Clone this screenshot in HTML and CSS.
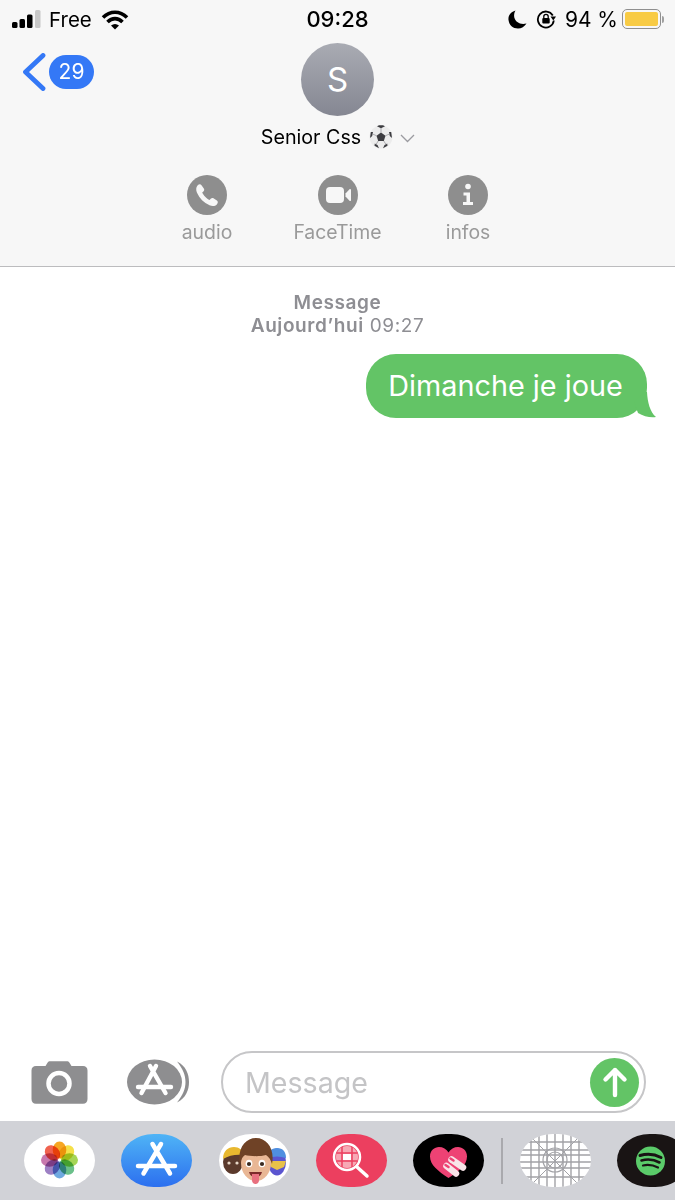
FILE: index.html
```html
<!DOCTYPE html>
<html lang="fr">
<head>
  <meta charset="UTF-8" />
  <meta name="viewport" content="width=device-width, initial-scale=1.0" />
  <title>Messages - Senior Css</title>
  <link rel="stylesheet" href="styles.css">
</head>
<body>
  <div class="phone">

    <header class="top">
      <div class="status">
        <div class="status-left">
          <svg class="signal" width="30" height="20" viewBox="0 0 30 20">
            <rect x="0" y="13" width="5.5" height="6" rx="1.5" fill="#000"/>
            <rect x="7.5" y="10" width="5.5" height="9" rx="1.5" fill="#000"/>
            <rect x="15" y="5.500" width="5.5" height="13.5" rx="1.5" fill="#000"/>
            <rect x="23" y="1" width="5.5" height="18" rx="1.5" fill="#c8c8c8"/>
          </svg>
          <span>Free</span>
          <svg class="wifi" width="28" height="21" viewBox="0 0 28 21">
            <path d="M2 8.500C9 1.500 19 1.500 26 8.500" fill="none" stroke="#000" stroke-width="3.600"/>
            <path d="M6.500 13C11 8.500 17 8.500 21.500 13" fill="none" stroke="#000" stroke-width="3.600"/>
            <path d="M10 16.500L14 20.500L18 16.500C15.500 14.500 12.500 14.500 10 16.500Z" fill="#000"/>
          </svg>
        </div>
        <div class="status-time">09:28</div>
        <div class="status-right">
          <svg width="19" height="19" viewBox="0 0 19 19">
            <path d="M7.500 0.500C2.500 2 0 5.500 0.500 10C1 15 5 18.500 10 18.500C13.500 18.500 16.500 16.500 18.500 13.500C12 15 7.500 12 6.300 7.500C5.800 5 6.300 2.500 7.500 0.500Z" fill="#000"/>
          </svg>
          <svg class="lock-rotate" width="20" height="20" viewBox="0 0 20 20">
            <path d="M16.800 6.500A8 8 0 1 0 17.800 11.500" fill="none" stroke="#000" stroke-width="1.800"/>
            <path d="M14.500 7.500L20 7.500L17.300 11.500Z" fill="#000"/>
            <rect x="6.300" y="9" width="7.400" height="5.500" rx="1" fill="#000"/>
            <path d="M7.800 9V7.500A2.200 2.200 0 0 1 12.200 7.500V9" fill="none" stroke="#000" stroke-width="1.300"/>
          </svg>
          <span class="percent">94 %</span>
          <div class="battery"><div class="battery-level"></div></div>
          <div class="battery-tip"></div>
        </div>
      </div>

      <div class="contact">
        <a class="back">
          <svg width="24" height="38" viewBox="0 0 24 38">
            <path d="M21 2.500L3.500 19L21 35.500" fill="none" stroke="#3478f6" stroke-width="4.800" stroke-linecap="round" stroke-linejoin="round"/>
          </svg>
          <span class="badge">29</span>
        </a>
        <div class="avatar">S</div>
      </div>

      <div class="name">
        <span>Senior Css</span>
        <svg class="ball" width="24" height="24" viewBox="0 0 24 24">
          <circle cx="12" cy="12" r="11.500" fill="#ececec"/>
          <path d="M12 7.500L16.500 10.700L14.800 16H9.200L7.500 10.700Z" fill="#3c3c40"/>
          <path d="M8 1.200L12 3.200L16 1.200L14 0.300H10Z M1.800 7L1 13L3.200 11L4 7Z M22.200 7L23 13L20.800 11L20 7Z M5.500 20.800L10 23.300L8.500 20L5.800 18.500Z M18.500 20.800L14 23.300L15.500 20L18.200 18.500Z" fill="#3c3c40"/>
          <path d="M12 7.500V3M16.500 10.700L20.500 9M7.500 10.700L3.500 9M14.800 16L17 19.500M9.200 16L7 19.500" stroke="#9a9a9e" stroke-width="0.800" fill="none"/>
        </svg>
        <svg class="caret" width="15" height="9" viewBox="0 0 15 9">
          <path d="M1 1L7.500 7.500L14 1" fill="none" stroke="#9b9ba0" stroke-width="1.300"/>
        </svg>
      </div>

      <div class="actions">
        <div class="action">
          <div class="action-icon">
            <svg width="40" height="40" viewBox="0 0 40 40">
              <path d="M10.500 10.500C12 9 13.500 9 14.500 10.200L16.800 13.500C17.500 14.600 17.300 15.700 16.400 16.500L15.200 17.600C16.200 20.200 19.800 24 22.600 25L23.700 23.800C24.500 22.900 25.700 22.700 26.800 23.400L29.900 25.500C31.100 26.400 31.200 27.900 29.800 29.400C28 31.200 25.500 31.500 22.500 30.200C16.800 27.800 12.500 23.400 10 17.800C8.800 15 9 12.300 10.500 10.500Z" fill="#f7f7f7"/>
            </svg>
          </div>
          <span>audio</span>
        </div>
        <div class="action">
          <div class="action-icon">
            <svg width="40" height="40" viewBox="0 0 40 40">
              <rect x="8" y="12" width="18" height="16" rx="4" fill="#f7f7f7"/>
              <path d="M27.500 18.500L31.500 14.200C32.200 13.600 33 14 33 14.800V25.200C33 26 32.200 26.400 31.500 25.800L27.500 21.500Z" fill="#f7f7f7"/>
            </svg>
          </div>
          <span>FaceTime</span>
        </div>
        <div class="action">
          <div class="action-icon">
            <svg width="40" height="40" viewBox="0 0 40 40">
              <circle cx="20" cy="11.500" r="2.800" fill="#f7f7f7"/>
              <path d="M15.500 17.500H22V27H25V30H15V27H18.500V20.500H15.500Z" fill="#f7f7f7"/>
            </svg>
          </div>
          <span>infos</span>
        </div>
      </div>
    </header>

    <main class="thread">
      <div class="meta">
        <div class="meta-strong">Message</div>
        <div><span class="meta-strong">Aujourd’hui</span> 09:27</div>
      </div>
      <div class="bubble">
        Dimanche je joue
        <svg class="tail" width="24" height="26" viewBox="0 0 24 26">
          <path d="M12 0H15C15.500 10 18 20 24 25C18.500 25.800 11.500 24.500 6 21L2 10Z" fill="#63c466"/>
        </svg>
      </div>
    </main>

    <div class="composer">
      <svg class="camera" width="57" height="43" viewBox="0 0 57 43">
        <path d="M5 5H14.500L16.500 1.800C17.200 0.700 18 0.300 19.500 0.300H35.500C37 0.300 37.800 0.700 38.500 1.800L40.500 5H52C54.800 5 56.500 6.700 56.500 9.500V38C56.500 41 54.800 42.700 52 42.700H5C2.200 42.700 0.500 41 0.500 38V9.500C0.500 6.700 2.200 5 5 5Z" fill="#8e8e90"/>
        <circle cx="28" cy="22.500" r="10.500" fill="none" stroke="#fff" stroke-width="4.500"/>
      </svg>
      <svg class="apps" width="63" height="46" viewBox="0 0 63 46">
        <path d="M50 2.500C59 7 62 15 62 23C62 31 59 39 50 43.500C56 36 58.500 30 58.500 23C58.500 16 56 10 50 2.500Z" fill="#8e8e90"/>
        <ellipse cx="27.500" cy="23" rx="27.500" ry="22.500" fill="#8e8e90"/>
        <path d="M23 7L38.500 34M29 7L14.500 34" stroke="#fff" stroke-width="4.400" stroke-linecap="round"/>
        <path d="M11 28H44" stroke="#fff" stroke-width="4.400" stroke-linecap="round"/>
      </svg>
      <div class="field">
        <span class="placeholder">Message</span>
        <div class="send">
          <svg width="28" height="32" viewBox="0 0 28 32">
            <path d="M14 29V4M4.500 13.500L14 4L23.500 13.500" fill="none" stroke="#fff" stroke-width="4.400" stroke-linecap="round" stroke-linejoin="round"/>
          </svg>
        </div>
      </div>
    </div>

    <nav class="dock">
      <div class="app app-white">
        <svg width="71" height="53" viewBox="0 0 71 53">
          <g transform="translate(35.500 26)">
            <ellipse class="petal" cy="-10" rx="6.800" ry="8.500" fill="#f6a623"/>
            <ellipse class="petal" cy="-10" rx="6.800" ry="8.500" fill="#f5e04a" transform="rotate(45)"/>
            <ellipse class="petal" cy="-10" rx="6.800" ry="8.500" fill="#a5d556" transform="rotate(90)"/>
            <ellipse class="petal" cy="-10" rx="6.800" ry="8.500" fill="#6bc08a" transform="rotate(135)"/>
            <ellipse class="petal" cy="-10" rx="6.800" ry="8.500" fill="#6fa9e0" transform="rotate(180)"/>
            <ellipse class="petal" cy="-10" rx="6.800" ry="8.500" fill="#9d80c4" transform="rotate(225)"/>
            <ellipse class="petal" cy="-10" rx="6.800" ry="8.500" fill="#c878ad" transform="rotate(270)"/>
            <ellipse class="petal" cy="-10" rx="6.800" ry="8.500" fill="#f0624f" transform="rotate(315)"/>
          </g>
        </svg>
      </div>
      <div class="app app-store">
        <svg width="71" height="53" viewBox="0 0 71 53">
          <path d="M31.500 10L49 39.500M40 10L22.500 39.500M17 32H54" stroke="#fff" stroke-width="4.500" stroke-linecap="round"/>
        </svg>
      </div>
      <div class="app app-white">
        <svg width="71" height="53" viewBox="0 0 71 53">
          <!-- side figures -->
          <ellipse cx="14" cy="28" rx="10" ry="12" fill="#5b3a2c"/>
          <path d="M4 25C4 17 9 13 15 13C20 13 24 16 25 21C18 20 10 21 4 25Z" fill="#e8b82f"/>
          <circle cx="10" cy="29" r="1.600" fill="#e8d8c8"/>
          <circle cx="18" cy="29" r="1.600" fill="#e8d8c8"/>
          <ellipse cx="58" cy="28" rx="9" ry="13.500" fill="#5b55d0"/>
          <path d="M49 24C49 18 52 14 58 14C64 14 67 18 67 24C61 22 55 22 49 24Z" fill="#4f8fe0"/>
          <path d="M49 27H67L65 33L58 36L52 33Z" fill="#e8c24a"/>
          <!-- main head -->
          <ellipse cx="37" cy="29" rx="15" ry="18" fill="#e9b795"/>
          <path d="M21 30C18 15 26 4 37 4C48 4 56 15 53 30C52 26 50 23 47 21C40 23 30 22 26 21C23 23 22 26 21 30Z" fill="#6f4226"/>
          <ellipse cx="30" cy="29.500" rx="3.400" ry="3.800" fill="#fff"/>
          <ellipse cx="43" cy="29.500" rx="3.400" ry="3.800" fill="#fff"/>
          <circle cx="30" cy="30" r="2.100" fill="#3a2a20"/>
          <circle cx="43" cy="30" r="2.100" fill="#3a2a20"/>
          <path d="M30 38H43C42 42 39.500 43 36.500 43C33.500 43 31 42 30 38Z" fill="#7c2a2a"/>
          <path d="M33 40H40V46C40 48.500 38.500 50 36.500 50C34.500 50 33 48.500 33 46Z" fill="#e8707f"/>
        </svg>
      </div>
      <div class="app app-search">
        <svg width="71" height="53" viewBox="0 0 71 53">
          <circle cx="31" cy="23" r="11" fill="#f7a9b5"/>
          <path d="M20.500 19H41.500M20.500 27H41.500M26 12.500V33.500M36 12.500V33.500" stroke="#ec3f5f" stroke-width="1.500"/>
          <rect x="27" y="20" width="8" height="6" fill="#fff"/>
          <circle cx="31" cy="23" r="13" fill="none" stroke="#fff" stroke-width="2.500"/>
          <path d="M41 33L51 42" stroke="#fff" stroke-width="3.500" stroke-linecap="round"/>
        </svg>
      </div>
      <div class="app app-black">
        <svg width="71" height="53" viewBox="0 0 71 53">
          <path d="M35.500 44C25 37 17 31 17 22.500C17 16.500 21.500 13 26 13C30 13 33.500 15 35.500 18.500C37.500 15 41 13 45 13C49.500 13 54 16.500 54 22.500C54 31 46 37 35.500 44Z" fill="#ee4274"/>
          <path d="M38.500 25.500L50 33.500" stroke="#f8e4e8" stroke-width="6.500" stroke-linecap="round"/>
          <path d="M33.500 32L43 39.500" stroke="#f8e4e8" stroke-width="6.500" stroke-linecap="round"/>
          <path d="M37.500 24.500L40.500 26.500M32.500 31L35.500 33" stroke="#ee4274" stroke-width="2.500" stroke-linecap="round"/>
        </svg>
      </div>
      <div class="dock-divider"></div>
      <div class="app app-grid">
        <svg width="71" height="53" viewBox="0 0 71 53">
          <path d="M0 8H71M0 16H71M0 21H71M0 28H71M0 34H71M0 43H71M11 0V53M19 0V53M27 0V53M35 0V53M43 0V53M51 0V53M59 0V53" stroke="#a2a2a6" stroke-width="1.400" fill="none"/>
          <path d="M8 0L61 53M62 0L9 53" stroke="#a2a2a6" stroke-width="1" fill="none"/>
          <circle cx="35" cy="26" r="8" fill="none" stroke="#a2a2a6" stroke-width="1.200"/>
          <circle cx="35" cy="26" r="12" fill="none" stroke="#a2a2a6" stroke-width="1.200"/>
        </svg>
      </div>
      <div class="app app-spotify">
        <svg width="71" height="53" viewBox="0 0 71 53">
          <circle cx="33.500" cy="27" r="14.500" fill="#5bcb6a"/>
          <path d="M23 21.500C29.500 19.500 37.500 20 44 23.500" fill="none" stroke="#191414" stroke-width="3" stroke-linecap="round"/>
          <path d="M24.500 26.500C30 25 37 25.500 42.500 28.500" fill="none" stroke="#191414" stroke-width="2.600" stroke-linecap="round"/>
          <path d="M26 31.500C30.500 30.500 36 31 41 33.500" fill="none" stroke="#191414" stroke-width="2.200" stroke-linecap="round"/>
        </svg>
      </div>
    </nav>

  </div>
</body>
</html>
```

FILE: styles.css
```css
* {
  box-sizing: border-box;
}
body {
  margin: 0;
  font-family: Inter, "Liberation Sans", sans-serif;
  background-color: #fff;
  color: #000;
}
.phone {
  display: flex;
  flex-direction: column;
  height: 1200px;
  overflow: hidden;
}

/* header */
.top {
  height: 267px;
  background-color: #f7f7f7;
  border-bottom: 1px solid #bcbcbe;
}
.status {
  display: grid;
  grid-template-columns: 1fr auto 1fr;
  align-items: center;
  height: 38px;
  padding: 0 11px;
  font-size: 20.500px;
}
.status-left {
  display: flex;
  align-items: center;
  padding-left: 1px;
}
.signal {
  margin-right: 7px;
}
.wifi {
  margin-left: 9px;
}
.status-time {
  font-size: 22px;
  font-weight: 500;
}
.status-right {
  display: flex;
  align-items: center;
  justify-content: flex-end;
}
.lock-rotate {
  margin-left: 9px;
}
.percent {
  margin-left: 9px;
  margin-right: 4px;
  font-size: 21px;
}
.battery {
  width: 39px;
  height: 20px;
  padding: 2px;
  border: 1.500px solid #8f8f8f;
  border-radius: 5px;
}
.battery-level {
  height: 100%;
  background-color: #f8cb45;
  border-radius: 2px;
}
.battery-tip {
  width: 2px;
  height: 7px;
  margin-left: 1px;
  background-color: #a0a0a0;
  border-radius: 0 2px 2px 0;
}
.contact {
  display: flex;
  justify-content: center;
  position: relative;
  padding-top: 5px;
}
.back {
  display: flex;
  align-items: center;
  position: absolute;
  left: 22px;
  top: 15px;
}
.badge {
  width: 45px;
  height: 34px;
  margin-left: 3px;
  background-color: #3478f6;
  border-radius: 17px;
  color: #fff;
  font-size: 21px;
  line-height: 34px;
  text-align: center;
}
.avatar {
  width: 73px;
  height: 73px;
  background: linear-gradient(#a9abb3, #858792);
  border-radius: 50%;
  color: #fff;
  font-size: 33px;
  line-height: 73px;
  text-align: center;
}
.name {
  display: flex;
  align-items: center;
  justify-content: center;
  height: 28px;
  margin-top: 7px;
  padding-left: 1px;
  font-size: 19.700px;
}
.ball {
  margin-left: 8px;
}
.caret {
  margin-left: 7px;
  margin-top: 3px;
}
.actions {
  display: flex;
  justify-content: center;
  margin-top: 24px;
}
.action {
  display: flex;
  flex-direction: column;
  align-items: center;
  width: 130.500px;
  color: #9a9a9a;
  font-size: 19.400px;
}
.action span {
  margin-top: 5px;
}
.action-icon {
  width: 40px;
  height: 40px;
  background-color: #8e8e8e;
  border-radius: 50%;
}

/* conversation */
.thread {
  flex: 1;
  display: flex;
  flex-direction: column;
}
.meta {
  margin-top: 24px;
  color: #8e8e93;
  font-size: 19px;
  letter-spacing: 0.600px;
  line-height: 23px;
  text-align: center;
}
.meta-strong {
  font-weight: 600;
}
.bubble {
  position: relative;
  align-self: flex-end;
  width: 281px;
  height: 64px;
  margin: 17px 28px 0 0;
  padding-right: 2px;
  background-color: #63c466;
  border-radius: 30px;
  color: #fff;
  font-size: 28.800px;
  line-height: 63px;
  text-align: center;
}
.tail {
  position: absolute;
  right: -9px;
  bottom: 0;
}

/* message field */
.composer {
  display: flex;
  align-items: center;
  padding: 0 29px 8px 31px;
}
.camera {
  margin-top: 1px;
  flex-shrink: 0;
}
.apps {
  margin-left: 39px;
  flex-shrink: 0;
}
.field {
  flex: 1;
  display: flex;
  align-items: center;
  justify-content: space-between;
  height: 62px;
  margin-left: 31px;
  padding: 0 5px 0 22px;
  border: 2px solid #c6c6c8;
  border-radius: 31px;
}
.placeholder {
  color: #c4c4c6;
  font-size: 28.600px;
}
.send {
  display: flex;
  align-items: center;
  justify-content: center;
  width: 49px;
  height: 49px;
  background-color: #63c466;
  border-radius: 50%;
}

/* app strip */
.dock {
  display: flex;
  align-items: center;
  gap: 26.300px;
  height: 79px;
  padding-left: 24px;
  background-color: #d1d2d7;
  overflow: hidden;
}
.app {
  flex-shrink: 0;
  width: 71px;
  height: 53px;
  border-radius: 46% / 50%;
  overflow: hidden;
}
.app svg {
  display: block;
}
.petal {
  mix-blend-mode: multiply;
}
.app-white {
  background-color: #fff;
}
.app-store {
  background: linear-gradient(#4fb4f6, #2c6fef);
}
.app-search {
  background-color: #ec3f5f;
}
.app-black {
  background-color: #000;
}
.app-grid {
  background-color: #fff;
  margin-left: -9.300px;
}
.app-spotify {
  background-color: #191414;
}
.dock-divider {
  flex-shrink: 0;
  width: 2px;
  height: 46px;
  margin-left: -9.300px;
  background-color: #a9a9ad;
}
```
